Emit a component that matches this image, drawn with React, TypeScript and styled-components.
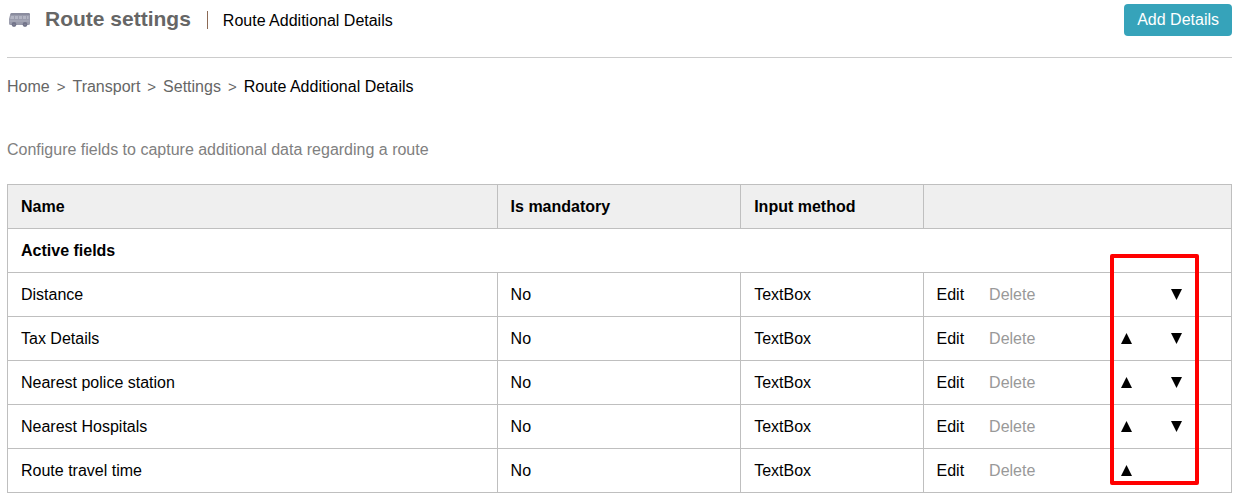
import React from "react";
import styled, { createGlobalStyle } from "styled-components";

const GlobalStyle = createGlobalStyle`
  body {
    margin: 0;
    background: #fff;
    color: #000;
    font: 16px/20px "Liberation Sans", Arial, sans-serif;
  }
`;

const Page = styled.main`
  padding: 0 7px 8px;
`;

const Header = styled.header`
  display: flex;
  align-items: flex-start;
  justify-content: space-between;
  padding: 4px 0 21px;
  border-bottom: 1px solid #ccc;
`;

const Heading = styled.div`
  display: flex;
  align-items: center;
  height: 32px;
`;

const BusSvg = styled.svg`
  margin: 0 15px 0 2px;
`;

const Title = styled.h1`
  margin: 0;
  color: #666;
  font-size: 21px;
  line-height: 28px;
  padding-bottom: 2px;
`;

const Divider = styled.span`
  width: 1px;
  height: 18px;
  margin: 0 15px 0 16px;
  background: #8c6a55;
`;

const Subtitle = styled.h2`
  margin: 0;
  padding-top: 2px;
  font-size: 16px;
  font-weight: 400;
`;

const AddButton = styled.button`
  height: 32px;
  padding: 0 13px;
  border: 0;
  border-radius: 4px;
  background: #36a3ba;
  color: #fff;
  font: inherit;
  cursor: pointer;
`;

const Breadcrumbs = styled.nav`
  display: flex;
  gap: 7px;
  margin-top: 19px;
  color: #666;
`;

const Crumb = styled.a`
  color: inherit;
  text-decoration: none;
`;

const Separator = styled.span`
  font-size: 15px;
`;

const Current = styled.span`
  color: #000;
`;

const Intro = styled.p`
  margin: 43px 0 24px;
  color: #808080;
`;

const TableArea = styled.section`
  position: relative;
`;

const Table = styled.table`
  width: 100%;
  border-collapse: collapse;
  table-layout: fixed;
`;

const HeadCell = styled.th<{ $width: number }>`
  width: ${(p) => p.$width}%;
  box-sizing: border-box;
  height: 44px;
  padding: 0 13px;
  border: 1px solid #bfbfbf;
  background: #efefef;
  text-align: left;
`;

const GroupCell = styled.th`
  height: 44px;
  box-sizing: border-box;
  padding: 0 13px;
  border: 1px solid #bfbfbf;
  text-align: left;
`;

const Cell = styled.td`
  height: 44px;
  box-sizing: border-box;
  padding: 0 13px;
  border: 1px solid #bfbfbf;
`;

const Actions = styled.div`
  display: flex;
  align-items: center;
  gap: 25px;
`;

const ActionLink = styled.a<{ $muted?: boolean }>`
  color: ${(p) => (p.$muted ? "#999" : "#000")};
  text-decoration: none;
`;

const Reorder = styled.div`
  display: grid;
  grid-template-columns: 50px 50px;
  margin: 0 17px 0 auto;
`;

const MoveButton = styled.button<{ $column: number }>`
  grid-column: ${(p) => p.$column};
  grid-row: 1;
  display: flex;
  align-items: center;
  justify-content: center;
  height: 20px;
  padding: 0;
  border: 0;
  background: none;
  cursor: pointer;
`;

const Highlight = styled.div`
  position: absolute;
  top: 70px;
  right: 33px;
  bottom: 8px;
  width: 89px;
  box-sizing: border-box;
  border: 4px solid #f00;
  border-radius: 2px;
  pointer-events: none;
`;

const BusIcon = () => (
  <BusSvg width="21" height="14" viewBox="0 0 21 14" aria-hidden="true">
    <path d="M2.5 0H19.5Q21 0 21 1.5V10.5Q21 12 19.5 12H1.5Q0 12 0 10.5V6L1.2 1.2Q1.5 0 2.5 0Z" fill="#9a9cac" />
    <path d="M2.8 0H19.5Q21 0 21 1.6V2H1.5Q1.8 0 2.8 0Z" fill="#8a8c9e" />
    <path d="M2 3H5V6H1.2ZM6 3H9V6H6ZM10 3H13V6H10ZM14 3H17V6H14ZM18 3H19.5V6H18Z" fill="#b3b5c3" />
    <path d="M0.5 7H20.5V9H0.5Z" fill="#a3a5b4" />
    <circle cx="5" cy="11.5" r="2.4" fill="#73758a" />
    <circle cx="16" cy="11.5" r="2.4" fill="#73758a" />
    <circle cx="5" cy="11.5" r="0.6" fill="#8e90a2" />
    <circle cx="16" cy="11.5" r="0.6" fill="#8e90a2" />
  </BusSvg>
);

const Triangle = ({ down }: { down?: boolean }) => (
  <svg width="11" height="11" viewBox="0 0 11 11" aria-hidden="true">
    <path d={down ? "M0 0H11L5.5 11Z" : "M5.5 0L11 11H0Z"} />
  </svg>
);

const fields = ["Distance", "Tax Details", "Nearest police station", "Nearest Hospitals", "Route travel time"];
const crumbs = ["Home", "Transport", "Settings"];

export default function App() {
  return (
    <>
      <GlobalStyle />
      <Page>
        <Header>
          <Heading>
            <BusIcon />
            <Title>Route settings</Title>
            <Divider />
            <Subtitle>Route Additional Details</Subtitle>
          </Heading>
          <AddButton type="button">Add Details</AddButton>
        </Header>
        <Breadcrumbs aria-label="Breadcrumb">
          {crumbs.map((crumb) => (
            <React.Fragment key={crumb}>
              <Crumb href="#">{crumb}</Crumb>
              <Separator>&gt;</Separator>
            </React.Fragment>
          ))}
          <Current aria-current="page">Route Additional Details</Current>
        </Breadcrumbs>
        <Intro>Configure fields to capture additional data regarding a route</Intro>
        <TableArea>
          <Table>
            <thead>
              <tr>
                <HeadCell $width={40}>Name</HeadCell>
                <HeadCell $width={19.9}>Is mandatory</HeadCell>
                <HeadCell $width={14.9}>Input method</HeadCell>
                <HeadCell $width={25.2} aria-label="Actions" />
              </tr>
            </thead>
            <tbody>
              <tr>
                <GroupCell colSpan={4}>Active fields</GroupCell>
              </tr>
              {fields.map((name, i) => (
                <tr key={name}>
                  <Cell>{name}</Cell>
                  <Cell>No</Cell>
                  <Cell>TextBox</Cell>
                  <Cell>
                    <Actions>
                      <ActionLink href="#">Edit</ActionLink>
                      <ActionLink href="#" $muted>Delete</ActionLink>
                      <Reorder>
                        {i > 0 && (
                          <MoveButton type="button" $column={1} aria-label={`Move ${name} up`}>
                            <Triangle />
                          </MoveButton>
                        )}
                        {i < fields.length - 1 && (
                          <MoveButton type="button" $column={2} aria-label={`Move ${name} down`}>
                            <Triangle down />
                          </MoveButton>
                        )}
                      </Reorder>
                    </Actions>
                  </Cell>
                </tr>
              ))}
            </tbody>
          </Table>
          <Highlight />
        </TableArea>
      </Page>
    </>
  );
}
